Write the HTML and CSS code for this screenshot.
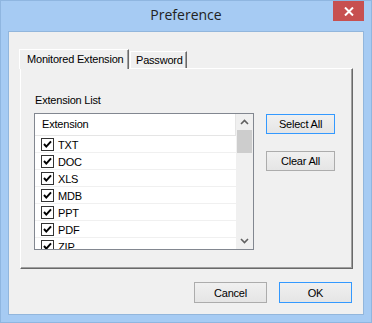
FILE: index.html
```html
<!DOCTYPE html>
<html>
<head>
<meta charset="utf-8">
<link rel="stylesheet" href="styles.css">
</head>
<body>
<div class="window">
  <div class="titlebar">
    <span class="title">Preference</span>
    <div class="close">
      <svg width="10" height="9" viewBox="0 0 10 9"><path d="M1 0.5 L9 8.5 M9 0.5 L1 8.5" stroke="#fff" stroke-width="2"/></svg>
    </div>
  </div>
  <div class="client">
    <div class="tabs">
      <div class="tabstrip">
        <div class="tab active">Monitored Extension</div>
        <div class="tab inactive">Password</div>
      </div>
      <div class="panel">
        <div class="label">Extension List</div>
        <div class="content">
          <div class="listview">
            <div class="listmain">
              <div class="header"><span class="col">Extension</span></div>
              <div class="rows">
                <div class="item"><span class="cb"><svg width="11" height="11" viewBox="0 0 11 11"><path d="M2 5 L4.3 7.6 L9 2.3" stroke="#000" stroke-width="2" fill="none"/></svg></span><span>TXT</span></div>
                <div class="item"><span class="cb"><svg width="11" height="11" viewBox="0 0 11 11"><path d="M2 5 L4.3 7.6 L9 2.3" stroke="#000" stroke-width="2" fill="none"/></svg></span><span>DOC</span></div>
                <div class="item"><span class="cb"><svg width="11" height="11" viewBox="0 0 11 11"><path d="M2 5 L4.3 7.6 L9 2.3" stroke="#000" stroke-width="2" fill="none"/></svg></span><span>XLS</span></div>
                <div class="item"><span class="cb"><svg width="11" height="11" viewBox="0 0 11 11"><path d="M2 5 L4.3 7.6 L9 2.3" stroke="#000" stroke-width="2" fill="none"/></svg></span><span>MDB</span></div>
                <div class="item"><span class="cb"><svg width="11" height="11" viewBox="0 0 11 11"><path d="M2 5 L4.3 7.6 L9 2.3" stroke="#000" stroke-width="2" fill="none"/></svg></span><span>PPT</span></div>
                <div class="item"><span class="cb"><svg width="11" height="11" viewBox="0 0 11 11"><path d="M2 5 L4.3 7.6 L9 2.3" stroke="#000" stroke-width="2" fill="none"/></svg></span><span>PDF</span></div>
                <div class="item"><span class="cb"><svg width="11" height="11" viewBox="0 0 11 11"><path d="M2 5 L4.3 7.6 L9 2.3" stroke="#000" stroke-width="2" fill="none"/></svg></span><span>ZIP</span></div>
              </div>
            </div>
            <div class="scrollbar">
              <div class="arrow"><svg width="9" height="6" viewBox="0 0 9 6"><path d="M1 5 L4.5 1.5 L8 5" stroke="#606060" stroke-width="1.6" fill="none"/></svg></div>
              <div class="thumb"></div>
              <div class="track"></div>
              <div class="arrow"><svg width="9" height="6" viewBox="0 0 9 6"><path d="M1 1 L4.5 4.5 L8 1" stroke="#606060" stroke-width="1.6" fill="none"/></svg></div>
            </div>
          </div>
          <div class="side">
            <button class="btn default">Select All</button>
            <button class="btn">Clear All</button>
          </div>
        </div>
      </div>
    </div>
    <div class="footer">
      <button class="btn wide">Cancel</button>
      <button class="btn wide default">OK</button>
    </div>
  </div>
</div>
</body>
</html>
```
FILE: styles.css
```css
* { box-sizing: border-box; }
html, body { margin: 0; padding: 0; }
body {
  width: 372px;
  height: 323px;
  overflow: hidden;
  font-family: "Liberation Sans", Arial, sans-serif;
  font-size: 11px;
  letter-spacing: -0.2px;
  color: #000;
}
.window {
  position: relative;
  width: 372px;
  height: 323px;
  background: #a6cbf3;
  border: 1px solid #8fb6e0;
  padding: 0 7px 7px 7px;
  display: flex;
  flex-direction: column;
}
.titlebar {
  height: 30px;
  padding-bottom: 3px;
  display: flex;
  align-items: center;
  justify-content: center;
}
.title {
  font-family: "Open Sans", "Noto Sans", sans-serif;
  font-size: 14px;
  letter-spacing: 0;
  color: #222;
}
.close {
  position: absolute;
  top: 0;
  right: 7px;
  width: 31px;
  height: 20px;
  background: #c75050;
  display: flex;
  align-items: center;
  justify-content: center;
}
.close svg { display: block; }
.client {
  flex: 1;
  background: #f0f0f0;
  border: 1px solid #92b6dc;
  padding: 17px 10px 0 11px;
  display: flex;
  flex-direction: column;
}
.tabs { display: flex; flex-direction: column; }
.tabstrip {
  height: 19px;
  display: flex;
  align-items: flex-end;
}
.tab {
  background: #f0f0f0;
  border-top: 1px solid #fff;
  border-left: 1px solid #fff;
  border-right: 1px solid #696969;
  box-shadow: inset -1px 0 0 #a0a0a0;
  display: flex;
  align-items: center;
  white-space: nowrap;
}
.tab.active {
  position: relative;
  z-index: 1;
  width: 110px;
  height: 20px;
  margin-bottom: -1px;
  margin-left: -1px;
  padding-left: 7px;
  padding-bottom: 2px;
}
.tab.inactive {
  width: 57px;
  height: 17px;
  margin-left: 1px;
  padding-left: 5px;
  padding-bottom: 1px;
}
.panel {
  height: 201px;
  background: #f0f0f0;
  border-top: 1px solid #fff;
  border-left: 1px solid #fff;
  border-right: 1px solid #696969;
  border-bottom: 1px solid #696969;
  box-shadow: inset -1px -1px 0 #a0a0a0;
  padding: 25px 0 0 13px;
}
.label {
  height: 13px;
  line-height: 13px;
  padding-left: 1px;
  margin-bottom: 6px;
}
.content {
  display: flex;
  align-items: flex-start;
}
.listview {
  width: 220px;
  height: 137px;
  border: 1px solid #828790;
  background: #fff;
  display: flex;
  overflow: hidden;
}
.listmain {
  flex: 1;
  display: flex;
  flex-direction: column;
  overflow: hidden;
}
.header {
  height: 22px;
  flex: none;
  border-bottom: 1px solid #e5e5e5;
  display: flex;
}
.col {
  flex: 1;
  border-right: 1px solid #e5e5e5;
  padding-left: 7px;
  line-height: 21px;
}
.rows { flex: 1; overflow: hidden; }
.item {
  height: 17px;
  flex: none;
  border-bottom: 1px solid #f0f0f0;
  display: flex;
  align-items: center;
  padding-left: 6px;
  gap: 4px;
}
.item span:last-child { padding-top: 1px; }
.cb {
  width: 13px;
  height: 13px;
  border: 1px solid #333;
  background: #fff;
  display: flex;
  align-items: center;
  justify-content: center;
}
.cb svg { display: block; }
.scrollbar {
  width: 17px;
  flex: none;
  background: #f0f0f0;
  display: flex;
  flex-direction: column;
}
.arrow {
  height: 16px;
  flex: none;
  display: flex;
  align-items: center;
  justify-content: center;
}
.thumb {
  height: 23px;
  flex: none;
  margin: 0 1px;
  background: #cdcdcd;
}
.track { flex: 1; }
.side {
  margin-left: 12px;
  padding-top: 1px;
  display: flex;
  flex-direction: column;
  gap: 17px;
}
.btn {
  font-family: "Liberation Sans", Arial, sans-serif;
  font-size: 11px;
  letter-spacing: -0.2px;
  color: #000;
  width: 69px;
  height: 20px;
  padding: 0;
  margin: 0;
  border: 1px solid #acacac;
  background: linear-gradient(#f0f0f0, #e5e5e5);
  border-radius: 0;
}
.btn.default { border-color: #3399ff; }
.btn.wide { width: 73px; height: 21px; }
.footer {
  margin-top: 13px;
  padding-right: 1px;
  display: flex;
  justify-content: flex-end;
  gap: 12px;
}
```
